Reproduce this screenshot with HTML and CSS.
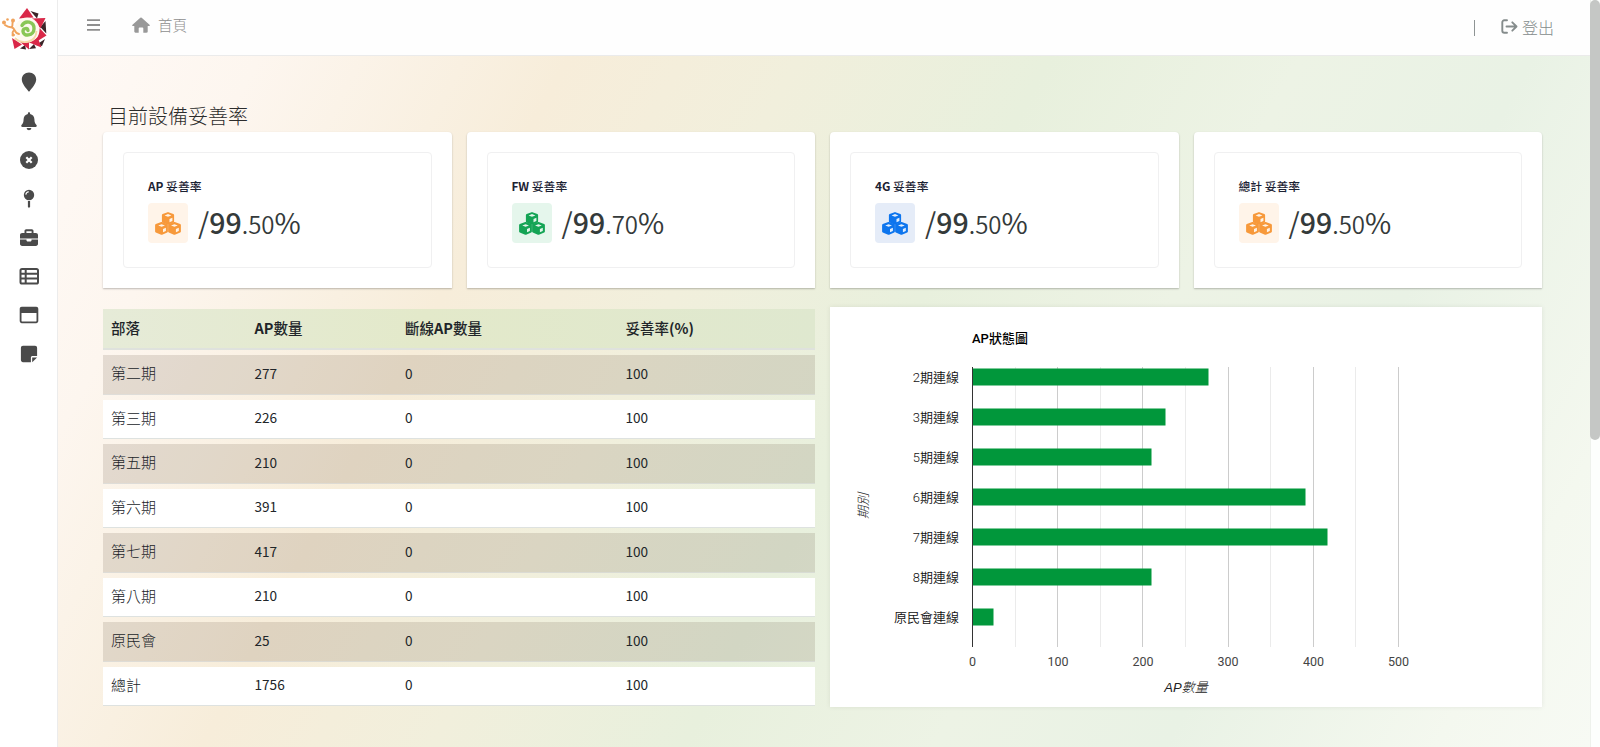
FILE: index.html
```html
<!DOCTYPE html>
<html lang="zh-Hant">
<head>
<meta charset="utf-8">
<title>首頁</title>
<link rel="stylesheet" href="styles.css">
</head>
<body>
<svg width="0" height="0" class="defs">
  <symbol id="cubes" viewBox="0 0 26 23">
    <g fill="currentColor" stroke="currentColor" stroke-width="2.200" stroke-linejoin="round">
      <path d="M13 1.200l5 1.800v6.600l-5 2.200-5-2.200V3z"/>
      <path d="M6.600 11l5.200 2v6.400L6.600 21.700l-5.400-2.300V13z"/>
      <path d="M19.400 11l5.400 2v6.400l-5.400 2.300-5.200-2.300V13z"/>
    </g>
    <g fill="#fff" fill-opacity=".88">
      <path d="M13 2.100l3.400 1.300-3.400 1.300-3.400-1.300zM14.500 6.900l2.900-1.200v3.200l-2.900 1.300z"/>
      <path d="M6.600 12.200l3.400 1.300-3.400 1.300-3.400-1.300zM8 17l2.900-1.200V19L8 20.300z"/>
      <path d="M19.400 12.200l3.400 1.300-3.400 1.300-3.400-1.300zM20.900 17l2.900-1.200V19l-2.900 1.300z"/>
    </g>
  </symbol>
</svg>
<div class="app">
  <nav class="sidebar">
    <svg class="logo" viewBox="0 0 52 50">
      <g fill="#3b2428">
        <path d="M30.500 7l8 2.500-1.500 5zM45.500 17l.8 12.500-6-6.500zM45 35l-3 7-6-1zM34 40l2 4.200-7 .8zM25 41l1 4.500-6-1z"/>
      </g>
      <g fill="#d92848">
        <path d="M27 4l6.500 9.500L19 14.500z"/>
        <path d="M45.500 14l-5 10.500-8.500-10z"/>
        <path d="M46.500 31.500L36 38l3.500-14z"/>
        <path d="M41.500 43.500L28 38l9.500-5z"/>
        <path d="M29 45.500L19 37l10 .500z"/>
        <path d="M14.500 45L12 34l10 6.500z"/>
      </g>
      <circle cx="27" cy="26" r="12.500" fill="#fffaf0"/>
      <path d="M15 34c7 7 21 5 21.500-7" fill="none" stroke="#f6d9a8" stroke-width="1.800"/>
      <path d="M22 21.500c3-6 12.500-4 12 3.500-.5 7-10.500 8-11 2.500-.2-3.500 4.500-4 5-1" fill="none" stroke="#8ac757" stroke-width="3.400" stroke-linecap="round"/>
      <path d="M19 30c-5-.5-3.500-6-7-6.500s-5-1-7-2.500m7 2c1-3 0-4 1-6m1 9c-2 2.500-2 3.500 0 5" fill="none" stroke="#f0a35c" stroke-width="1.900" stroke-linecap="round"/>
      <g fill="#f0a35c"><circle cx="4" cy="18.500" r="2"/><circle cx="13" cy="16.500" r="2"/><circle cx="7.500" cy="15.500" r="1.300"/><circle cx="13" cy="31" r="1.500"/></g>
    </svg>
    <svg class="ico" viewBox="0 0 20 20"><path d="M10 .5c4.200 0 7.200 3 7.200 7.100 0 4-4.600 9.200-6.600 11.600a.8.8 0 0 1-1.200 0C7.400 16.800 2.800 11.600 2.800 7.600 2.800 3.500 5.800.5 10 .5z"/></svg>
    <svg class="ico" viewBox="0 0 20 20"><path d="M10 1.200c.7 0 1.100.5 1.100 1.200v.5c2.600.5 4.300 2.700 4.300 5.300 0 3.200.8 4.500 2.100 5.900.7.800.2 1.900-.9 1.900H3.400c-1.100 0-1.600-1.100-.9-1.900 1.300-1.400 2.100-2.700 2.100-5.900 0-2.600 1.700-4.800 4.300-5.300v-.5c0-.7.400-1.200 1.100-1.200zM7.700 17h4.600c0 3-4.600 3-4.600 0z"/></svg>
    <svg class="ico" viewBox="0 0 20 20"><circle cx="10" cy="10" r="9"/><path d="M7.300 7.300l5.400 5.400m0-5.400l-5.400 5.400" stroke="#fff" stroke-width="2.200"/></svg>
    <svg class="ico" viewBox="0 0 20 20"><circle cx="10" cy="6" r="5.200"/><path d="M6.800 5.600c.2-1.700 1.300-2.700 3-2.900" fill="none" stroke="#fff" stroke-width="1.100"/><path d="M8.900 12h2.200v5.500L10 19.300l-1.100-1.800z"/></svg>
    <svg class="ico" viewBox="0 0 20 20"><path d="M5.500 5V3c0-1 .7-1.700 1.700-1.700h5.600c1 0 1.700.7 1.700 1.700v2h2.300c1.300 0 2.200.9 2.200 2.200v3.300H1V7.200C1 5.900 1.900 5 3.200 5zm1.900 0h5.200V3.200H7.400zM1 11.600h6.500v1c0 .5.300.8.800.8h3.400c.5 0 .8-.3.800-.8v-1H19v4.200c0 1.300-.9 2.200-2.200 2.200H3.200C1.900 18 1 17.100 1 15.800z"/></svg>
    <svg class="ico" viewBox="0 0 20 20"><g fill="none" stroke="#4a4a4a" stroke-width="2"><rect x="1.500" y="3" width="17.500" height="14.500" rx="1.600"/><path d="M1.500 7.700H19M1.500 12.600H19M6.700 3v14.500"/></g></svg>
    <svg class="ico" viewBox="0 0 20 20"><path fill-rule="evenodd" d="M2.800 1.800h14.400c1.200 0 2.100.9 2.100 2.100v12.200c0 1.200-.9 2.100-2.100 2.100H2.800C1.600 18.200.7 17.300.7 16.100V3.900c0-1.200.9-2.100 2.100-2.100zM2.500 8v8c0 .3.200.5.500.5h14c.3 0 .5-.2.500-.5V8z"/></svg>
    <svg class="ico" viewBox="0 0 20 20"><path d="M4 1.800h12c1.200 0 2.100.9 2.100 2.100v8.200h-4.500c-1 0-1.700.7-1.700 1.700v4.400H4c-1.200 0-2.100-.9-2.100-2.100V3.900c0-1.200.9-2.100 2.100-2.100z"/><path d="M13.200 18.200v-4.700h4.900z"/></svg>
  </nav>
  <div class="main">
    <header class="topbar">
      <svg class="burger" viewBox="0 0 13 12"><path d="M0 1.200h13M0 6h13M0 10.800h13"/></svg>
      <svg class="home" viewBox="0 0 18 16"><path d="M9 .4a1 1 0 0 1 .7.300L17.500 7.800c.6.600.2 1.300-.6 1.300h-1.200v5.500c0 .8-.5 1.200-1.200 1.200h-3.200v-4.600c0-.5-.3-.8-.8-.8h-3c-.5 0-.8.300-.8.800v4.600H3.500c-.7 0-1.200-.4-1.200-1.200V9.100H1.100C.3 9.100-.1 8.400.5 7.800L8.300.7A1 1 0 0 1 9 .4z"/></svg>
      <span class="crumb">首頁</span>
      <span class="divider"></span>
      <svg class="exit" viewBox="0 0 17 15"><path d="M6 1.300H3.300c-1.100 0-2 .8-2 2v8.400c0 1.200.9 2 2 2H6M5.500 7.500h9.700M11.300 3.300l4.200 4.200-4.200 4.200"/></svg>
      <span class="logout">登出</span>
    </header>
    <main class="content">
      <h1>目前設備妥善率</h1>
      <section class="cards">
        <div class="card"><div class="inner"><h2><b>AP</b> 妥善率</h2><div class="stat"><span class="badge orange"><svg><use href="#cubes"/></svg></span><p>/<b>99</b><small>.50</small>%</p></div></div></div>
        <div class="card"><div class="inner"><h2><b>FW</b> 妥善率</h2><div class="stat"><span class="badge green"><svg><use href="#cubes"/></svg></span><p>/<b>99</b><small>.70</small>%</p></div></div></div>
        <div class="card"><div class="inner"><h2><b>4G</b> 妥善率</h2><div class="stat"><span class="badge blue"><svg><use href="#cubes"/></svg></span><p>/<b>99</b><small>.50</small>%</p></div></div></div>
        <div class="card"><div class="inner"><h2>總計 妥善率</h2><div class="stat"><span class="badge orange"><svg><use href="#cubes"/></svg></span><p>/<b>99</b><small>.50</small>%</p></div></div></div>
      </section>
      <section class="panels">
        <div class="table">
          <div class="row head"><span>部落</span><span><b>AP</b>數量</span><span>斷線<b>AP</b>數量</span><span>妥善率<b>(%)</b></span></div>
          <div class="row dark"><span>第二期</span><span>277</span><span>0</span><span>100</span></div>
          <div class="row"><span>第三期</span><span>226</span><span>0</span><span>100</span></div>
          <div class="row dark"><span>第五期</span><span>210</span><span>0</span><span>100</span></div>
          <div class="row"><span>第六期</span><span>391</span><span>0</span><span>100</span></div>
          <div class="row dark"><span>第七期</span><span>417</span><span>0</span><span>100</span></div>
          <div class="row"><span>第八期</span><span>210</span><span>0</span><span>100</span></div>
          <div class="row dark"><span>原民會</span><span>25</span><span>0</span><span>100</span></div>
          <div class="row"><span>總計</span><span>1756</span><span>0</span><span>100</span></div>
        </div>
        <svg class="chart" viewBox="0 0 712 400">
          <text class="title" x="142" y="36">AP狀態圖</text>
          <path class="minor" d="M185.500 60v280M270.500 60v280M355.500 60v280M440.500 60v280M525.500 60v280"/>
          <path class="major" d="M227.500 60v280M312.500 60v280M398.500 60v280M483.500 60v280M568.500 60v280"/>
          <g class="bars">
            <rect x="143" y="61.500" width="235.500" height="17"/>
            <rect x="143" y="101.500" width="192.500" height="17"/>
            <rect x="143" y="141.500" width="178.500" height="17"/>
            <rect x="143" y="181.500" width="332.500" height="17"/>
            <rect x="143" y="221.500" width="354.500" height="17"/>
            <rect x="143" y="261.500" width="178.500" height="17"/>
            <rect x="143" y="301.500" width="20.500" height="17"/>
          </g>
          <path class="axis" d="M142.500 60v280"/>
          <g class="cats">
            <text x="129" y="75">2期連線</text><text x="129" y="115">3期連線</text>
            <text x="129" y="155">5期連線</text><text x="129" y="195">6期連線</text>
            <text x="129" y="234.500">7期連線</text><text x="129" y="274.500">8期連線</text>
            <text x="129" y="314.500">原民會連線</text>
          </g>
          <g class="ticks">
            <text x="142.500" y="359">0</text><text x="228" y="359">100</text><text x="313" y="359">200</text>
            <text x="398" y="359">300</text><text x="483.500" y="359">400</text><text x="568.500" y="359">500</text>
          </g>
          <text class="name" x="356" y="385">AP數量</text>
          <text class="name" transform="translate(37.500 199) rotate(-90)">期別</text>
        </svg>
      </section>
    </main>
  </div>
  <div class="scroll"><div class="thumb"></div></div>
</div>
</body>
</html>
```

FILE: styles.css
```css
* { box-sizing: border-box; }
body {
  margin: 0;
  overflow: hidden;
  color: #212529;
  font-family: "Noto Sans CJK TC", sans-serif;
}
h1, h2, p { margin: 0; }
.defs { position: absolute; }
.app { display: flex; height: 747px; }

.sidebar {
  flex: none;
  width: 58px;
  display: flex;
  flex-direction: column;
  align-items: center;
  background: #fff;
  border-right: 1px solid #ececec;
}
.logo { width: 52px; height: 50px; margin: 4px 6px 18px 0; }
.ico { width: 20px; height: 20px; margin-bottom: 18.900px; fill: #4a4a4a; }

.main {
  flex: 1;
  display: flex;
  flex-direction: column;
  background: linear-gradient(118deg, #fffaf7 0%, #fdf6ef 12%, #f7edda 28%, #f1efdc 40%, #e8f0dd 53%, #edf3e5 66%, #e9f2e5 78%, #f4f8ef 92%, #f7faf4 100%);
}
.topbar {
  height: 56px;
  display: flex;
  align-items: center;
  padding: 0 36px 4px 29px;
  background: #fefefe;
  border-bottom: 1px solid #ebebeb;
  color: #8e8e8e;
}
.burger { width: 13px; height: 12px; margin-bottom: 1px; stroke: #8e8e8e; stroke-width: 1.800; }
.home { width: 18px; height: 16px; margin: 0 0 1px 32px; fill: #999; }
.crumb { margin: -2px 0 0 8px; font-size: 14.500px; font-weight: 300; }
.divider { width: 1px; height: 16px; margin: 4px 26px 0 auto; background: #8e9494; }
.exit { width: 17px; height: 15px; margin: 2px 4px 0 0; fill: none; stroke: #858c8c; stroke-width: 1.900; stroke-linecap: round; stroke-linejoin: round; }
.logout { margin-top: 2px; font-size: 16px; font-weight: 300; color: #858c8c; }

.content { padding: 45px 48px 0 45px; }
h1 { height: 31px; padding-left: 5px; font-size: 20px; font-weight: 300; line-height: 29px; color: #2c2c2c; }
.cards { display: grid; grid-template-columns: repeat(4, 1fr); gap: 15px; }
.card {
  height: 156px;
  padding: 20px;
  background: #fff;
  border-radius: 4px 4px 0 0;
  box-shadow: 0 1px 2px rgba(0, 0, 0, .25);
}
.inner { height: 116px; padding: 24px 24px; border: 1px solid #f0f0f1; border-radius: 4px; }
h2 { height: 26px; font-size: 11.800px; line-height: 17px; font-weight: 500; color: #1c2233; }
h2 b { font-weight: 700; }
.stat { display: flex; align-items: center; height: 40px; }
.badge { display: grid; place-items: center; width: 40px; height: 40px; border-radius: 4px; }
.badge svg { width: 26px; height: 23px; }
.orange { background: #fff4e9; color: #f7993b; }
.green { background: #e5f6ec; color: #14a455; }
.blue { background: #e5ecf8; color: #0d75ee; }
.stat p { margin-left: 10px; font-size: 28.500px; line-height: 40px; color: #343a3a; white-space: nowrap; }
.stat b { font-weight: 500; }
.stat small { font-size: 24px; font-weight: 350; }

.panels { display: grid; grid-template-columns: 1fr 1fr; gap: 15px; margin-top: 19px; }
.table { display: flex; flex-direction: column; gap: 5px; padding-top: 2px; font-size: 13.600px; }
.row {
  display: grid;
  grid-template-columns: 143.500px 150.500px 220.500px 1fr;
  align-items: center;
  height: 39.500px;
  padding: 0 0 3px 8px;
  background: #fff;
  border-bottom: 1px solid #dee2e0;
}
.row span:first-child { font-size: 15px; font-weight: 300; }
.row.dark { background: rgba(86, 70, 45, .15); border-bottom-color: rgba(220, 224, 224, .6); }
.row.head { height: 41px; background: linear-gradient(90deg, #e6ebd8, #e3e9ca 45%, #dfe8cf); border-bottom: 2px solid #dfe2dd; font-size: 14.500px; font-weight: 500; }
.row.head span:first-child { font-size: 14.500px; font-weight: 500; }

.chart { display: block; width: 100%; height: 400px; background: #fff; box-shadow: 0 0 5px rgba(0, 0, 0, .08); font-family: "Liberation Sans", "Noto Sans CJK TC", sans-serif; font-size: 13px; }
.title { font-family: Roboto, "Noto Sans CJK TC", sans-serif; font-weight: 500; fill: #000; }
.minor { stroke: #ebebeb; }
.major { stroke: #ccc; }
.axis { stroke: #333; }
.bars { fill: #01973b; }
.cats { text-anchor: end; font-family: Roboto, "Noto Sans CJK TC", sans-serif; fill: #111; font-weight: 350; }
.ticks { text-anchor: middle; font-family: Roboto, sans-serif; font-size: 12.500px; fill: #444; }
.name { text-anchor: middle; fill: #222; font-style: italic; font-weight: 300; }

.scroll { flex: none; width: 10px; background: #fdfefd; border-left: 1px solid #eef1ec; }
.thumb { height: 440px; margin-left: -1px; background: #c5c7c5; border-radius: 5px; }
```
